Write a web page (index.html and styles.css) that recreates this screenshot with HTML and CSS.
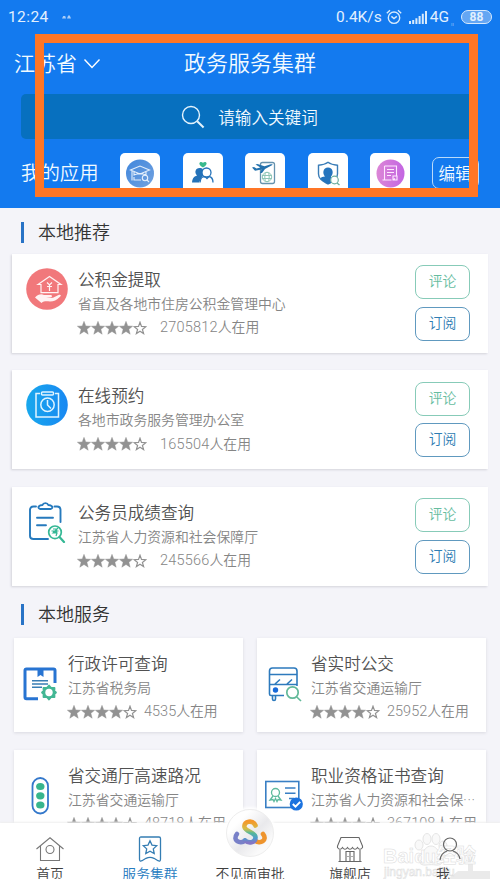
FILE: index.html
```html
<!DOCTYPE html>
<html lang="zh-CN">
<head>
<meta charset="utf-8">
<title>政务服务集群</title>
<link rel="stylesheet" href="styles.css">
</head>
<body>
<svg class="defs" aria-hidden="true">
  <symbol id="star" viewBox="0 0 14 14"><path d="M7 .3 8.800 4.900 13.700 5.200 9.900 8.300 11.200 13.200 7 10.500 2.800 13.200 4.100 8.300.3 5.200 5.200 4.900Z" fill="#929292" stroke="#929292" stroke-width=".4"/></symbol>
  <symbol id="star-o" viewBox="0 0 14 14"><path d="M7 1.200 8.500 5.400 12.900 5.700 9.400 8.400 10.600 12.600 7 10.200 3.400 12.600 4.600 8.400 1.100 5.700 5.500 5.400Z" fill="none" stroke="#929292" stroke-width="1.200"/></symbol>
  <symbol id="stars" viewBox="0 0 70 14"><use href="#star" width="14" height="14"/><use href="#star" x="14" width="14" height="14"/><use href="#star" x="28" width="14" height="14"/><use href="#star" x="42" width="14" height="14"/><use href="#star-o" x="56" width="14" height="14"/></symbol>
</svg>
<div class="screen">
  <header class="header">
    <div class="status">
      <span class="time">12:24</span>
      <svg class="dots" width="9" height="4" viewBox="0 0 9 4"><path d="M0 3.500 1.200 1h2L4 3.500ZM5 3.500 6.200.5h1.600L9 3.500Z" fill="#a9cdf8"/></svg>
      <span class="speed">0.4K/s</span>
      <svg class="alarm" width="16" height="16" viewBox="0 0 16 16" fill="none" stroke="#d8eafc" stroke-width="1.400"><circle cx="8" cy="8.700" r="5.700"/><path d="M5.400 7.400 8 9.500l2.800-2.100M.8 4.200 4 1.200M15.200 4.200 12 1.200"/></svg>
      <svg class="signal" width="18" height="13" viewBox="0 0 18 13" stroke="#d8eafc" stroke-width="2"><path d="M1 13v-3M4.200 13V9M7.400 13V7.300M10.600 13V5M13.800 13V2.700M17 13V0"/></svg>
      <span class="net">4G</span>
      <span class="data">ıı</span>
      <span class="battery">88</span>
    </div>
    <div class="titlebar">
      <div class="place">江苏省<svg width="18" height="12" viewBox="0 0 18 12" fill="none" stroke="#fff" stroke-width="1.400"><path d="m1.500 1.500 7.500 8 7.500-8"/></svg></div>
      <h1>政务服务集群</h1>
    </div>
    <div class="search">
      <svg width="24" height="24" viewBox="0 0 24 24" fill="none" stroke="#e4f3fd"><circle cx="10" cy="10" r="8.500" stroke-width="1.400"/><path d="m16.200 16.200 6.400 6.300" stroke-width="2"/></svg>
      <span>请输入关键词</span>
    </div>
    <div class="apps">
      <span class="apps-label">我的应用</span>
      <div class="tile"><svg width="40" height="40" viewBox="0 0 40 40"><defs><linearGradient id="steel" y2="1"><stop stop-color="#3f86dc"/><stop offset="1" stop-color="#74a3e0"/></linearGradient></defs><circle cx="20" cy="20.500" r="14" fill="url(#steel)"/><g fill="none" stroke="#e5f0fc" stroke-width="1.100"><path d="M10.500 17 20 13l9.500 4-9.500 4ZM14 19v3q6-2.500 12 0v-3M12 18v9.500M14 24v3h7"/><circle cx="25" cy="25" r="2.700"/><path d="m27 27 2 2"/></g></svg></div>
      <div class="tile"><svg width="40" height="40" viewBox="0 0 40 40"><path d="M20 14.500c-5-3-4-5.500-1.800-5.500 1.200 0 1.800 1 1.800 1s.6-1 1.800-1C24 9 25 11.500 20 14.500Z" fill="#38b98d"/><path d="M16.500 15c3 0 5 2 5 4.500 0 2-1 3.200-2.500 4.500l-3 5.500H9c.5-5 2.500-6 5-7-3-3-1.500-7.500 2.500-7.500Z" fill="#2472b9"/><g fill="#fff" stroke="#2472b9" stroke-width="1.300"><path d="M17 29.500c.6-5 2-6 5-6l2 2 2-2c2.500.5 4 2.500 4 6" /><circle cx="23.500" cy="19.500" r="4.500"/></g></svg></div>
      <div class="tile"><svg width="40" height="40" viewBox="0 0 40 40" fill="none"><rect x="15.500" y="9.500" width="14" height="21" rx="2" stroke="#6693ae" stroke-width="1.300"/><g stroke="#8fc6b6"><circle cx="22" cy="24" r="4.700"/><ellipse cx="22" cy="24" rx="2.200" ry="4.700"/><path d="M17 22.500h10M17 25.500h10"/></g><path d="m7 14.500 2-.5 2.500 1.500 4-1-5-3 2-.5 7 2.200 5.500-1.700c2-.6 3.700-.2 1.500 1L20 16l-3 4h-2l1.500-3.500-6.500 1.300Z" fill="#2472ae"/></svg></div>
      <div class="tile"><svg width="40" height="40" viewBox="0 0 40 40"><path d="M20 9.300c3 2.200 6 2.700 9.500 3V21c0 5-4.500 7-9.500 10-5-3-9.500-5-9.500-10v-8.700c3.500-.3 6.500-.8 9.500-3Z" fill="#fff" stroke="#397cb7" stroke-width="1.400"/><path d="M20 14.500c5 0 6 6 3 9v6.500l-3 1c-4-2-6-3.500-7.500-5.500 1-1.500 2-1.800 4.500-2-3-3-2-9 3-9Z" fill="#2574bd"/><circle cx="26.500" cy="27" r="3.800" fill="#fff" stroke="#6eafa1" stroke-width="1.200"/><path d="m29 30 2.500 2" stroke="#6eafa1" stroke-width="1.400"/></svg></div>
      <div class="tile"><svg width="40" height="40" viewBox="0 0 40 40"><defs><linearGradient id="pink" x2="1"><stop stop-color="#dc86d6"/><stop offset="1" stop-color="#c365e2"/></linearGradient></defs><circle cx="20.500" cy="20.500" r="14" fill="url(#pink)"/><path d="M14.500 13h12v10M14.500 13v14h7M17 16.500h7M17 19.500h7M17 22.500h4M12.500 27h8M23 27l2-1.500M23 23h4v4h-4Z" stroke="#ffe9ff" stroke-width="1.100" fill="none"/></svg></div>
      <div class="edit">编辑</div>
    </div>
    <div class="frame"></div>
  </header>

  <main class="content">
    <h2>本地推荐</h2>
    <div class="list">
      <article class="card">
        <svg class="icon" width="42" height="42" viewBox="0 0 42 42"><circle cx="21" cy="21" r="20.800" fill="#f1787b"/><g fill="none" stroke="#fff3f3" stroke-width="1.200"><path d="m12 16.500 11.500-8 11.500 8h-3v8.200H15v-8.200ZM21 14.500l2.500 2.500 2.500-2.500M23.500 17v6M21 18.500h5"/></g><path d="M9 29.500c3-3 6-4 9-2.500h7c1.500.4 1.500 2-.2 2.300l-4.800.7 7-.3 5.500-2.700c2-.8 3.200.2 1.500 1.800-3.500 3.500-6 4.700-10 4.700-4-.2-6-.5-8.500 1.500Z" fill="#fff3f3"/></svg>
        <div class="info"><h3>公积金提取</h3><p>省直及各地市住房公积金管理中心</p><div class="rate"><svg width="70" height="14"><use href="#stars"/></svg><span><b>2705812</b>人在用</span></div></div>
        <div class="actions"><span class="btn green">评论</span><span class="btn">订阅</span></div>
      </article>
      <article class="card">
        <svg class="icon" width="42" height="42" viewBox="0 0 42 42"><defs><linearGradient id="sky" x2="1"><stop stop-color="#18a8ed"/><stop offset="1" stop-color="#1988f2"/></linearGradient></defs><circle cx="21" cy="21" r="20.800" fill="url(#sky)"/><g fill="none" stroke="#dff4ff" stroke-width="1.500"><path d="M14 9.500h-4V33h22.500V9.500H29"/><rect x="15.500" y="8" width="12" height="3" rx="1"/><circle cx="21.500" cy="20.700" r="6.700"/><path d="M21.500 16v5l3.500 3.500"/></g></svg>
        <div class="info"><h3>在线预约</h3><p>各地市政务服务管理办公室</p><div class="rate"><svg width="70" height="14"><use href="#stars"/></svg><span><b>165504</b>人在用</span></div></div>
        <div class="actions"><span class="btn green">评论</span><span class="btn">订阅</span></div>
      </article>
      <article class="card">
        <svg class="icon" width="42" height="42" viewBox="0 0 42 42" fill="none"><g stroke="#267abd" stroke-width="1.900" stroke-linecap="round" stroke-linejoin="round"><path d="M10 5.500H7.500Q4 5.500 4 9v26q0 3 3.500 3H22M28.500 5.500H31q3.500 0 3.500 3.500v12M11 16.800h16M11 24.200h9"/><path d="M14 8c-3.500-1.500-.5-4 2.500-4 .8-2.500 5-2.500 5.800 0 3 0 6 2.500 2.500 4Z"/></g><g stroke="#35b895"><circle cx="29" cy="31.300" r="6.300" stroke-width="1.700"/><path d="m33.500 36 4.500 5" stroke-width="2.200" stroke-linecap="round"/><path d="M25.500 30h7M27 28h3.500v3H27M32 27l-5 5h4l-1 3" stroke-width="1.200"/></g></svg>
        <div class="info"><h3>公务员成绩查询</h3><p>江苏省人力资源和社会保障厅</p><div class="rate"><svg width="70" height="14"><use href="#stars"/></svg><span><b>245566</b>人在用</span></div></div>
        <div class="actions"><span class="btn green">评论</span><span class="btn">订阅</span></div>
      </article>
    </div>
    <h2 class="second">本地服务</h2>
    <div class="grid">
      <article class="mini">
        <svg class="icon" width="36" height="36" viewBox="0 0 36 36" fill="none"><path d="M15 32.700H3.500q-1.500 0-1.500-1.500V4.500Q2 3 3.500 3h27q1.500 0 1.500 1.500V17" stroke="#2874d2" stroke-width="3"/><path d="M14.500 3v8l3-2 3 2V3Z" fill="#2874d2"/><path d="M9 14.800h16M9 18h16M9 21.300h10" stroke="#397eb4" stroke-width="1.400"/><path d="m26 19.500 2 2.400h3.500l-.1 3.100 1.600 1.500-1.600 1.500.1 3.100H28l-2 2.400-2-2.400h-3.500l.1-3.100-1.600-1.500 1.600-1.500-.1-3.100H24Z" fill="#43b794" stroke="#43b794" stroke-width="1.800" stroke-linejoin="round"/><circle cx="26" cy="26.500" r="3.700" fill="#fff"/></svg>
        <div class="info"><h3>行政许可查询</h3><p>江苏省税务局</p><div class="rate"><svg width="70" height="14"><use href="#stars"/></svg><span><b>4535</b>人在用</span></div></div>
      </article>
      <article class="mini bus">
        <svg class="icon" width="36" height="36" viewBox="0 0 36 36" fill="none"><g stroke="#2d7abd" stroke-width="1.600"><path d="M17 29.500H4q-1.500 0-1.500-1.500V5q0-3 3-3H27q3 0 3 3v15M2.500 8.500H30M2.500 18.500H30M8 18l5-4.500M20 18l5-4.500M5.500 30v3q0 1.500 1.500 1.500t1.500-1.500v-3"/></g><circle cx="8.500" cy="24" r="2.700" fill="#1769d8"/><circle cx="25.500" cy="26.500" r="5.700" fill="#fff" stroke="#62b999" stroke-width="1.700"/><path d="m29.800 31 4.200 4" stroke="#62b999" stroke-width="1.700"/></svg>
        <div class="info"><h3>省实时公交</h3><p>江苏省交通运输厅</p><div class="rate"><svg width="70" height="14"><use href="#stars"/></svg><span><b>25952</b>人在用</span></div></div>
      </article>
      <article class="mini road">
        <svg class="icon" width="36" height="38" viewBox="0 0 36 38"><rect x="9.500" y="1" width="15.500" height="35.500" rx="7.750" fill="#fff" stroke="#3478cb" stroke-width="1.800"/><g fill="#38b58d"><ellipse cx="17.300" cy="9.500" rx="4.200" ry="3.600"/><ellipse cx="17.300" cy="18.800" rx="4.200" ry="3.600"/><ellipse cx="17.300" cy="28" rx="4.200" ry="3.600"/></g></svg>
        <div class="info"><h3>省交通厅高速路况</h3><p>江苏省交通运输厅</p><div class="rate"><svg width="70" height="14"><use href="#stars"/></svg><span><b>48718</b>人在用</span></div></div>
      </article>
      <article class="mini cert">
        <svg class="icon" width="40" height="38" viewBox="0 0 40 38" fill="none"><rect x=".8" y="5.500" width="33" height="26" stroke="#397fc4" stroke-width="1.600"/><path d="M20 12h10.500M20 17.300h10.500M24 22.500h5" stroke="#397fc4" stroke-width="1.600"/><g stroke="#5dba9d" stroke-width="1.300"><circle cx="10.500" cy="16.500" r="4"/><path d="m8 20-3 4 3-.5 1 2 1.500-3 1.500 3 1-2 3 .5-3-4"/></g><circle cx="31.300" cy="28" r="6.600" fill="#1c73df"/><path d="m27.800 28 2.700 2.700 4.700-4.800" stroke="#fff" stroke-width="2"/></svg>
        <div class="info"><h3>职业资格证书查询</h3><p>江苏省人力资源和社会保<i>···</i></p><div class="rate"><svg width="70" height="14"><use href="#stars"/></svg><span><b>367108</b>人在用</span></div></div>
      </article>
    </div>
  </main>

  <nav class="nav">
    <div class="item"><svg width="30" height="28" viewBox="0 0 30 28" fill="none" stroke="#777" stroke-width="1.100"><path d="M1.500 13 15 1.800 28.500 13M5.500 10v14.500h19V10"/><circle cx="15" cy="13.500" r="4"/></svg><span>首页</span></div>
    <div class="item active"><svg width="30" height="28" viewBox="0 0 30 28" fill="none" stroke="#347db3" stroke-width="1.300"><path d="M4.500 2.500q0-1.500 1.500-1.500h18q1.500 0 1.500 1.500V23q0 3-2.500 1.700l-4-2.400q-4-2-8 0l-4 2.400Q4.500 26 4.500 23Z"/><path d="m15 4.800 2 4.300 4.700.6-3.400 3.200.9 4.700-4.200-2.300-4.200 2.300.9-4.700-3.400-3.200 4.700-.6Z"/></svg><span>服务集群</span></div>
    <div class="item"><div class="spacer"></div><span>不见面审批</span></div>
    <div class="item"><svg width="30" height="28" viewBox="0 0 30 28" fill="none" stroke="#666" stroke-width="1.100"><path d="M6 1.500h18l3.500 8.500v1.500q-2.500 3.500-5 0-2.500 3.500-5 0-2.500 3.500-5 0-2.500 3.500-5 0-2.500 3.500-5 0V10ZM5 14v11.500M25 14v11.500M3.500 25.500h23M11 25.500v-10h8v10M15 15.500v10M13 20v1M17 20v1"/></svg><span>旗舰店</span></div>
    <div class="watermark">
      <svg width="110" height="46" viewBox="0 0 110 46"><g fill="#f7f7f7" stroke="#ddd"><ellipse cx="37" cy="12" rx="4" ry="5"/><ellipse cx="45" cy="6" rx="4" ry="5.500"/><ellipse cx="54" cy="6" rx="4" ry="5.500"/><ellipse cx="61" cy="13" rx="4" ry="5"/><path d="M49 13c5 0 7 5 10 8 5 6 1 12-5 11-3-.5-6-.5-10 0-6 1-11-5-5-11 3-3 5-8 10-8Z"/></g><path d="M66 46l10-8h10V24h5v14h17v8Z" fill="#e4e4e4"/></svg>
      <span class="brand">Bai<em>du</em>经验</span><span class="url">jingyan.baidu</span>
    </div>
    <div class="item me"><svg width="30" height="28" viewBox="0 0 30 28" fill="none" stroke="#666" stroke-width="1.200"><circle cx="15" cy="8.500" r="6.500"/><path d="M5 24q1-7 7-9M18 15q6 2 7 8"/></svg><span>我</span></div>
    <div class="hub"><svg width="36" height="30" viewBox="0 0 36 30" fill="none" stroke-width="4.600" stroke-linecap="round"><defs><linearGradient id="s" x2="0" y2="1"><stop stop-color="#f4982b"/><stop offset=".35" stop-color="#d5be48"/><stop offset=".55" stop-color="#55b999"/><stop offset=".8" stop-color="#4e9bcd"/><stop offset="1" stop-color="#8276c6"/></linearGradient></defs><path d="M5 16c-5 6 3 11 8 6.500" stroke="#7880c8"/><path d="M31 16c5 6-3 11-8 6.500" stroke="#ee942d"/><path d="M23.500 7.500C21 1.500 11.500 3 12.500 9c1 5 11 5 11 10.500 0 5.500-7 6-10.500 3" stroke="url(#s)"/></svg></div>
  </nav>
</div>
</body>
</html>
```
FILE: styles.css
```css
* { box-sizing: border-box; }
body { margin: 0; font-family: Roboto, "Noto Sans CJK SC", sans-serif; font-weight: 350; }
h1, h2, h3, p { margin: 0; font-weight: 350; }
svg { display: block; flex: none; }
b, i, em { font-weight: inherit; font-style: normal; }
.defs { position: absolute; width: 0; height: 0; }
.screen { width: 500px; height: 879px; overflow: hidden; display: flex; flex-direction: column; background: #f4f4f9; }

.header { position: relative; height: 208px; flex: none; background: #137aef; color: #f2faff; }
.status { height: 34px; display: flex; align-items: center; padding: 0 8px; color: #e2f0fe; font-size: 15.500px; font-weight: 400; white-space: nowrap; }
.time { width: 41px; letter-spacing: .4px; }
.dots { margin-left: 13px; }
.speed { margin-left: auto; }
.alarm { margin: 0 7px 0 4px; }
.net { margin-left: 3px; }
.data { width: 12px; padding-left: 2px; font-size: 6px; align-self: flex-end; line-height: 20px; opacity: .5; }
.battery { width: 31px; height: 14px; border: 1.500px solid #d7e9fd; border-radius: 7px; background: #64a6f3; text-align: center; font-size: 12px; line-height: 12px; font-weight: 700; }
.titlebar { height: 60px; display: grid; grid-template-columns: 1fr auto 1fr; align-items: center; padding: 0 14px; }
.place { display: flex; align-items: center; gap: 6px; font-size: 21px; line-height: 30px; }
.titlebar h1 { font-size: 22px; line-height: 30px; }
.search { height: 45px; margin: 0 22px 0 21px; border-radius: 5px; background: #0770bf; display: flex; align-items: center; justify-content: center; gap: 13px; font-size: 16.600px; }
.apps { display: flex; align-items: flex-start; padding: 14px 0 0 21px; }
.apps-label { width: 99px; font-size: 19.400px; line-height: 42px; }
.tile { width: 40px; height: 40px; margin-right: 22.500px; border-radius: 5px; background: #fff; }
.edit { width: 47px; height: 32px; margin: 4px 0 0 -1px; border: 1px solid #b9dafa; border-radius: 7px; text-align: center; font-size: 16.600px; line-height: 33px; white-space: nowrap; }
.frame { position: absolute; left: 35px; top: 34px; width: 443px; height: 163px; border: 9px solid #ff7626; }

.content { height: 615px; flex: none; overflow: hidden; }
h2 { display: flex; align-items: center; gap: 14px; height: 22px; line-height: 25px; margin: 13.500px 0 10px 21px; color: #333; font-size: 18px; }
h2::before { content: ""; width: 3px; height: 21px; background: #2873c6; }
.list { display: flex; flex-direction: column; gap: 17.500px; padding: 0 12px; }
.card { height: 99px; display: flex; padding: 14px 18px 0 14px; background: #fff; box-shadow: -1px 1px 2px #d3d3da; }
.info { min-width: 0; color: #858585; white-space: nowrap; }
.info h3 { color: #515151; font-size: 16.600px; line-height: 25px; height: 24px; }
.info p { font-size: 13.850px; line-height: 24px; }
.rate { height: 24px; display: flex; align-items: center; gap: 12px; margin-left: -1px; font-size: 13.850px; line-height: 22px; }
.rate b { font-size: 14.500px; }
.card .info { margin-left: 10px; }
.card .rate { gap: 13px; }
.card b { letter-spacing: .2px; }
.actions { display: flex; flex-direction: column; gap: 7.500px; margin: -2.500px 0 0 auto; }
.btn { width: 55px; height: 34px; border: 1.500px solid #6099bf; border-radius: 8px; color: #2f7db3; font-size: 13.850px; line-height: 31px; text-align: center; }
.btn.green { border-color: #87cbb8; color: #67bd9f; }
.second { margin-top: 17.500px; margin-bottom: 12.500px; }
.grid { display: grid; grid-template-columns: 229.500px 229.500px; gap: 18px 13.500px; padding: 0 13.500px; }
.mini { height: 94px; display: flex; padding: 14px 0 0 9px; background: #fff; box-shadow: 0 1px 3px #d9d9e0; }
.mini .icon { margin: 14px 0 0; }
.mini .info { margin-left: 9.500px; }
.mini .rate { gap: 6px; }
.mini .rate svg { margin-right: 1px; }
.bus { padding-left: 10px; }
.mini.bus .info { margin-left: 8.500px; }
.road .icon { margin-top: 13px; }
.cert { padding-left: 8px; }
.mini.cert .info { margin-left: 6.500px; }
.cert .icon { margin-top: 12px; }
.mini i { letter-spacing: .7px; }

.nav { position: relative; flex: 1; display: grid; grid-template-columns: repeat(5, 100px); background: #fff; color: #3f3f3f; box-shadow: 0 -1px 2px #eee; }
.item { display: flex; flex-direction: column; align-items: center; padding-top: 13px; font-size: 13.850px; }
.item span { line-height: 20px; white-space: nowrap; }
.spacer { height: 28px; }
.active { color: #267bbf; }
.me { position: relative; }
.me span { margin-left: -14px; }
.hub { position: absolute; left: 226px; top: -14px; width: 48px; height: 48px; border-radius: 50%; background: linear-gradient(135deg, #fff 25%, #e9e9ec 55%, #fafafa 80%); border: 1px solid #eee; box-shadow: 0 0 3px 2px #fff; display: flex; align-items: center; justify-content: center; }
.watermark { position: absolute; left: 382px; top: 10px; width: 110px; height: 46px; overflow: hidden; color: #fff; -webkit-text-stroke: .5px #cfcfcf; font-family: "Liberation Sans", "Noto Sans CJK SC", sans-serif; opacity: .75; }
.watermark svg { position: absolute; left: 0; top: 0; }
.brand { position: absolute; left: 1px; top: 11px; font-size: 20px; line-height: 24px; font-weight: 700; white-space: nowrap; }
.brand em { font-size: 18px; }
.url { position: absolute; left: 2px; top: 32px; font-size: 12px; line-height: 14px; }
```
